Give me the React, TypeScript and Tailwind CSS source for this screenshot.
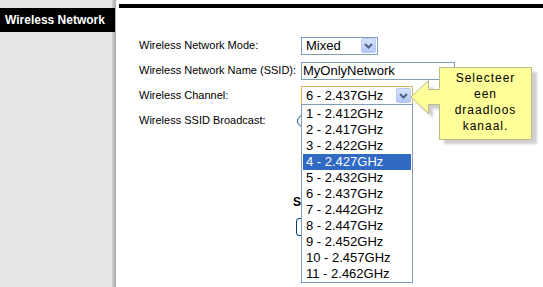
import React from "react";

const channels = [
  "1 - 2.412GHz",
  "2 - 2.417GHz",
  "3 - 2.422GHz",
  "4 - 2.427GHz",
  "5 - 2.432GHz",
  "6 - 2.437GHz",
  "7 - 2.442GHz",
  "8 - 2.447GHz",
  "9 - 2.452GHz",
  "10 - 2.457GHz",
  "11 - 2.462GHz",
];

const ComboButton = () => (
  <span className="flex h-[15px] w-[15px] items-center justify-center rounded-[2px] border border-[#b6c8f4] bg-gradient-to-b from-[#d6e2fd] to-[#b3c8f7]">
    <svg width="9" height="6" viewBox="0 0 9 6" aria-hidden="true">
      <path d="M1 1l3.5 3.5L8 1" fill="none" stroke="#4d6185" strokeWidth="2" />
    </svg>
  </span>
);

export default function App() {
  return (
    <div className="relative flex h-[287px] w-[543px] overflow-hidden bg-white font-['Liberation_Sans',Arial,sans-serif] text-black">
      {/* ── SIDEBAR ─────────────────────────────────────────────── */}
      <aside className="flex w-[116px] shrink-0">
        <div className="w-[112px] bg-[#e6e6e6] pt-[8px]">
          <div className="relative z-10 flex h-[24px] w-[115px] items-center bg-black pl-[5px] text-[12px] font-bold text-white">
            Wireless Network
          </div>
        </div>
        <div className="w-[4px] bg-gradient-to-r from-[#d2d2d2] to-[#a8a8a8]" />
      </aside>

      {/* ── MAIN ────────────────────────────────────────────────── */}
      <main className="flex flex-1 flex-col pt-[4px]">
        <div className="ml-[3px] h-[4px] bg-black" />

        <div className="mt-[25px] flex flex-col pl-[23px] text-[11px]">
          <div className="flex h-[25px] items-center">
            <span className="w-[162px]">Wireless Network Mode:</span>
            <div className="flex h-[18px] w-[77px] items-center justify-between border border-[#7f9db9] bg-white pl-[4px] pr-[1px] text-[13px]">
              <span>Mixed</span>
              <ComboButton />
            </div>
          </div>

          <div className="flex h-[25px] items-center">
            <span className="w-[162px]">Wireless Network Name (SSID):</span>
            <div className="flex h-[18px] w-[154px] items-center border border-[#7f9db9] bg-white pl-[1px] text-[13px]">
              MyOnlyNetwork
            </div>
          </div>

          <div className="relative z-20 flex h-[25px] items-center">
            <span className="w-[162px]">Wireless Channel:</span>
            <div className="relative">
              <div className="flex h-[19px] w-[112px] items-center justify-between border border-[#e3b25c] bg-white pl-[4px] pr-[1px] text-[13px]">
                <span>6 - 2.437GHz</span>
                <ComboButton />
              </div>
              {/* open dropdown list */}
              <ul className="absolute left-0 top-[18px] w-[112px] border border-[#7f9db9] bg-white px-[1px] pt-[1px] text-[13px]">
                {channels.map((c, i) => (
                  <li
                    key={c}
                    className={
                      i === 3
                        ? "flex h-[16px] items-center bg-[#316ac5] pl-[3px] text-white"
                        : "flex h-[16px] items-center pl-[3px]"
                    }
                  >
                    {c}
                  </li>
                ))}
              </ul>
            </div>
          </div>

          <div className="flex h-[25px] items-center">
            <span className="w-[158px]">Wireless SSID Broadcast:</span>
            <span className="inline-block h-[12px] w-[12px] rounded-full border border-[#1c5180] bg-white" />
          </div>
        </div>

        <div className="mt-[62px] pl-[177px] text-[12px] font-bold leading-[14px]">Save Settings</div>
        <div className="mt-[9px] pl-[180px]">
          <span className="block h-[18px] w-[90px] rounded-[3px] border border-[#003c74] bg-white" />
        </div>
      </main>

      {/* ── CALLOUT ─────────────────────────────────────────────── */}
      <svg className="pointer-events-none absolute left-0 top-0 z-30" width="543" height="287" aria-hidden="true">
        <defs>
          <filter id="sh" x="-10%" y="-10%" width="130%" height="130%">
            <feGaussianBlur stdDeviation="1.2" />
          </filter>
        </defs>
        <path
          d="M444 72H537V144H444V109H433V118L416 102L433 86V95H444Z"
          fill="#cfcfcf"
          filter="url(#sh)"
        />
        <path
          d="M439.5 67.5H531.5V139.5H439.5V104.5H428.5V113.5L411 97L428.5 80.5V89.5H439.5Z"
          fill="#ffff99"
          stroke="#b9b98a"
          strokeWidth="1"
        />
      </svg>
      <div className="absolute left-[439px] top-[67px] z-40 flex h-[72px] w-[93px] flex-col items-center pt-[3px] text-[12px] leading-[16px] tracking-[1px]">
        <span>Selecteer</span>
        <span>een</span>
        <span>draadloos</span>
        <span>kanaal.</span>
      </div>
    </div>
  );
}
